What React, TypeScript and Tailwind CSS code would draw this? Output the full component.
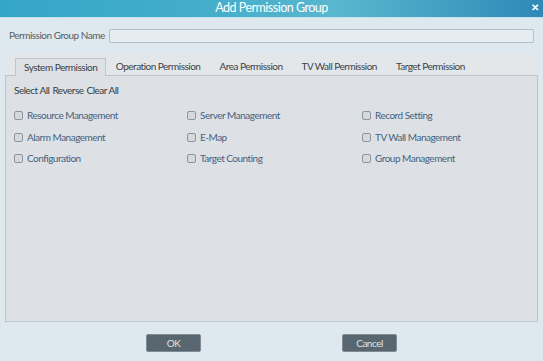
import React from 'react';

const tabs = ['System Permission', 'Operation Permission', 'Area Permission', 'TV Wall Permission', 'Target Permission'];

const rows = [
  ['Resource Management', 'Server Management', 'Record Setting'],
  ['Alarm Management', 'E-Map', 'TV Wall Management'],
  ['Configuration', 'Target Counting', 'Group Management'],
];

const CheckItem: React.FC<{ label: string }> = ({ label }) => (
  <label className="flex items-center gap-[4px] text-[#45627f]">
    <span className="w-[9px] h-[9px] border border-[#8e969c] rounded-[2px] bg-[#d4d9dd]" />
    <span>{label}</span>
  </label>
);

const App: React.FC = () => {
  return (
    <div
      className="w-[543px] h-[361px] bg-[#dde9ee] flex flex-col text-[10px] tracking-[-0.5px] overflow-hidden"
      style={{ fontFamily: 'Lato, "Open Sans", sans-serif' }}
    >
      <div className="h-[18px] flex items-center justify-center relative bg-[linear-gradient(90deg,#34a6c8_0%,#45aecb_40%,#5ab7cf_62%,#2f88b7_100%)] border-b border-[#c4e3ec]">
        <span className="text-white text-[12.5px] font-normal">Add Permission Group</span>
        <span className="absolute right-[5px] top-[0px] text-white text-[10px] font-bold">✕</span>
      </div>

      <div className="flex items-center px-[9px] mt-[10px] gap-[4px]">
        <span className="text-[#565e64] whitespace-nowrap">Permission Group Name</span>
        <div className="flex-1 h-[14px] border border-[#b6c0c4] bg-[#e6edf0] rounded-[1px]" />
      </div>

      <div className="mx-[5px] mt-[11px] h-[268px] bg-[#e3e7ea] flex flex-col pt-[3px]">
        <div className="flex px-[10px] h-[18px] items-end">
          {tabs.map((t, i) => (
            <div
              key={t}
              className={
                i === 0
                  ? 'h-[18px] px-[8px] flex items-center text-[#3a4247] bg-[#dde1e5] border border-b-0 border-[#bdc6ca] relative top-[1px]'
                  : 'h-[18px] px-[9.5px] flex items-center text-[#3a4247]'
              }
            >
              {t}
            </div>
          ))}
        </div>
        <div className="flex-1 bg-[#dde1e5] border border-[#bdc6ca] px-[8px] pt-[7px]">
          <div className="flex gap-[3px] text-[#353b40]">
            <span>Select All</span>
            <span>Reverse</span>
            <span>Clear All</span>
          </div>
          <div className="mt-[10px] flex flex-col gap-[8.5px]">
            {rows.map((r, i) => (
              <div key={i} className="grid grid-cols-[173px_175px_1fr] h-[13px]">
                {r.map((c) => (
                  <CheckItem key={c} label={c} />
                ))}
              </div>
            ))}
          </div>
        </div>
      </div>

      <div className="flex justify-center gap-[141px] mt-[12px]">
        <button className="w-[55px] h-[18px] bg-[#58666f] text-[#dfe5e8] rounded-[2px] border border-[#7f8b92]">OK</button>
        <button className="w-[55px] h-[18px] bg-[#58666f] text-[#dfe5e8] rounded-[2px] border border-[#7f8b92]">Cancel</button>
      </div>
    </div>
  );
};

export default App;
